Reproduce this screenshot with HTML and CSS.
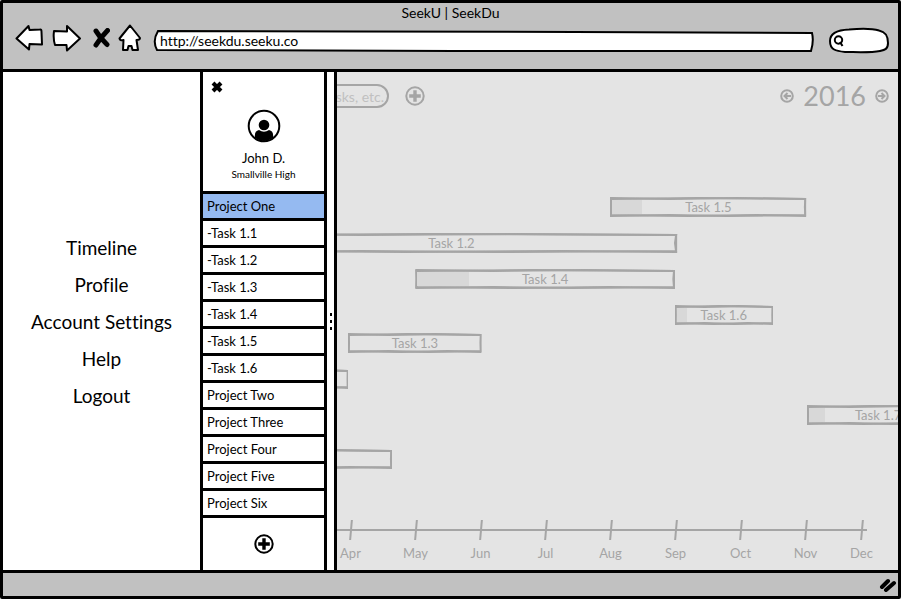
FILE: index.html
```html
<!DOCTYPE html>
<html lang="en">
<head>
<meta charset="utf-8">
<title>SeekU | SeekDu</title>
<link rel="stylesheet" href="styles.css">
</head>
<body>
<svg class="defs" aria-hidden="true">
  <symbol id="frame" viewBox="0 0 200 20" preserveAspectRatio="none">
    <path d="M1 1 L60 2 L130 1 L199 2 L198.500 10 L199 19 L150 18 L80 19 L1 18 L1.500 10 Z" vector-effect="non-scaling-stroke"/>
    <path d="M1 2 L90 1 L199 2 L199 18 L120 19 L60 18 L1 19 Z" vector-effect="non-scaling-stroke"/>
  </symbol>
  <symbol id="plus" viewBox="0 0 20 20">
    <circle cx="10" cy="10" r="8.7" fill="none" stroke="currentColor" stroke-width="2"/>
    <path d="M10 4.2V15.8M4.2 10H15.8" stroke="currentColor" stroke-width="3.4"/>
  </symbol>
</svg>
<div class="window">
  <header class="chrome">
    <div class="title">SeekU | SeekDu</div>
    <div class="toolbar">
      <button class="tool" aria-label="Back"><svg width="28" height="28" viewBox="0 0 28 28"><path d="M1.500 14.500 L13.500 2 L14.500 6 L25 5.500 Q26.500 5 26.500 8 L27 20.500 L14.500 20 L14 25.500 Z"/></svg></button>
      <button class="tool forward" aria-label="Forward"><svg width="29" height="28" viewBox="0 0 29 28"><path d="M2 7 L15 7.500 L15 2 L28 14.500 L15 26.500 L14.500 21 L3 21 Q1 15 2 7 Z"/></svg></button>
      <button class="tool stop" aria-label="Stop"><svg width="17" height="20" viewBox="0 0 17 20"><path d="M3 3 Q7 10 14 16.500 M14.500 2.500 Q8 9 3 17" class="cross"/></svg></button>
      <button class="tool home" aria-label="Home"><svg width="24" height="28" viewBox="0 0 24 28"><path d="M12 1.500 L22 14 Q22 16 18.500 16 L20 26 L14.500 26 L13.500 22 L10.500 22 L9.500 26 L5 26 L5.500 16 Q2 17 1.500 14.500 Z"/></svg></button>
      <label class="address">
        <svg class="outline" viewBox="0 0 660 22" preserveAspectRatio="none" aria-hidden="true"><path d="M5 1 L200 1.500 L420 2 L657 3 Q659 11 656 21 L300 21 L4 20 Q-1 11 5 1 Z" vector-effect="non-scaling-stroke"/></svg>
        <input type="text" aria-label="Address" value="http://seekdu.seeku.co">
      </label>
      <label class="lookup">
        <svg class="outline" viewBox="0 0 60 26" preserveAspectRatio="none" aria-hidden="true"><path d="M1 13 C1 5 8 2 20 1.500 C32 .5 45 1 50 2.500 C57 4 59 8 59 15 C59 21 56 22 51 23 C41 25 26 24 16 24 C7 23 1 22 1 13 Z" vector-effect="non-scaling-stroke"/></svg>
        <svg class="glass" width="11" height="12" viewBox="0 0 11 12" aria-hidden="true"><circle cx="5.500" cy="5" r="3.700"/><path d="M7 7 L9.500 11"/></svg>
        <input type="text" aria-label="Search the web">
      </label>
    </div>
  </header>

  <main class="body">
    <nav class="menu">
      <a href="#">Timeline</a>
      <a href="#">Profile</a>
      <a href="#">Account Settings</a>
      <a href="#">Help</a>
      <a href="#">Logout</a>
    </nav>

    <aside class="panel">
      <div class="profile">
        <button class="close" aria-label="Close panel"><svg width="12" height="12" viewBox="0 0 12 12"><path d="M2 2 L10 10 M10 2 L2 10"/></svg></button>
        <svg class="avatar" width="34" height="34" viewBox="0 0 34 34" aria-hidden="true"><circle cx="17" cy="17" r="15.300" fill="#fff" stroke="#000" stroke-width="2"/><circle cx="17" cy="16" r="5.300"/><path d="M8 29 Q7 22 12 21 Q17 24.500 22 21 Q27 22 26 29 Q17 35 8 29 Z"/></svg>
        <div class="name">John D.</div>
        <div class="school">Smallville High</div>
      </div>
      <ul class="projects">
        <li class="selected">Project One</li>
        <li>-Task 1.1</li>
        <li>-Task 1.2</li>
        <li>-Task 1.3</li>
        <li>-Task 1.4</li>
        <li>-Task 1.5</li>
        <li>-Task 1.6</li>
        <li>Project Two</li>
        <li>Project Three</li>
        <li>Project Four</li>
        <li>Project Five</li>
        <li>Project Six</li>
      </ul>
      <button class="add" aria-label="Add project"><svg width="20" height="20"><use href="#plus"/></svg></button>
    </aside>

    <div class="splitter"><i></i><i></i><i></i></div>

    <section class="timeline">
      <div class="controls">
        <input class="filter" type="text" aria-label="Search tasks" placeholder="Search tasks, etc.">
        <button class="add-task" aria-label="Add task"><svg width="20" height="20"><use href="#plus"/></svg></button>
        <div class="year">
          <button aria-label="Previous year"><svg width="14" height="14" viewBox="0 0 14 14"><circle cx="7" cy="7" r="5.800"/><path d="M11 7H4M7.500 4L4.500 7L7.500 10"/></svg></button>
          <span>2016</span>
          <button aria-label="Next year"><svg width="14" height="14" viewBox="0 0 14 14"><circle cx="7" cy="7" r="5.800"/><path d="M3 7H10M6.500 4L9.500 7L6.500 10"/></svg></button>
        </div>
      </div>
      <div class="chart">
        <div class="bar" style="margin-left:48.7%;width:35%"><svg><use href="#frame"/></svg><b style="width:15%"></b><span>Task 1.5</span></div>
        <div class="bar" style="margin-left:-20.1%;width:81%"><svg><use href="#frame"/></svg><span>Task 1.2</span></div>
        <div class="bar" style="margin-left:13.9%;width:46.4%"><svg><use href="#frame"/></svg><b style="width:20%"></b><span>Task 1.4</span></div>
        <div class="bar" style="margin-left:60.2%;width:17.5%"><svg><use href="#frame"/></svg><b style="width:10%"></b><span>Task 1.6</span></div>
        <div class="bar near" style="margin-left:2%;width:23.8%"><svg><use href="#frame"/></svg><span>Task 1.3</span></div>
        <div class="bar" style="margin-left:-8%;width:10%"><svg><use href="#frame"/></svg></div>
        <div class="bar" style="margin-left:83.8%;width:25.3%"><svg><use href="#frame"/></svg><b style="width:11%"></b><span>Task 1.7</span></div>
        <div class="bar far" style="margin-left:-20%;width:29.8%"><svg><use href="#frame"/></svg></div>
      </div>
      <ol class="months">
        <li>Apr</li><li>May</li><li>Jun</li><li>Jul</li><li>Aug</li><li>Sep</li><li>Oct</li><li>Nov</li><li>Dec</li>
      </ol>
    </section>
  </main>

  <footer class="status">
    <svg width="18" height="14" viewBox="0 0 18 14" aria-hidden="true"><path d="M3 9 L9 3 M7 12 L15 5"/></svg>
  </footer>
</div>
</body>
</html>
```
FILE: styles.css
```css
* { box-sizing: border-box; }

body {
  margin: 0;
  font-family: Lato, "Liberation Sans", sans-serif;
  font-size: 13px;
  font-variant-ligatures: none;
  color: #000;
  background: #fff;
}

button {
  display: flex;
  padding: 0;
  border: 0;
  background: none;
  color: inherit;
}

input {
  font: inherit;
  border: 0;
  background: none;
  outline: 0;
}

ul, ol { margin: 0; padding: 0; list-style: none; }

.defs { position: absolute; width: 0; height: 0; }

.window {
  display: flex;
  flex-direction: column;
  height: 100vh;
  border: 3px solid #000;
  border-radius: 2px;
  overflow: hidden;
}

.chrome {
  background: #c1c1c1;
  border-bottom: 3px solid #000;
  padding-bottom: 16px;
}

.title { text-align: center; font-size: 14px; line-height: 20px; }

.toolbar {
  display: flex;
  align-items: center;
  height: 30px;
  padding: 0 9px 0 12px;
}

.tool svg { fill: #fff; stroke: #000; stroke-width: 2; stroke-linejoin: round; stroke-linecap: round; }
.tool .cross { fill: none; stroke-width: 5; }
.forward { margin-left: 9px; }
.stop { margin-left: 12px; }
.home { margin-left: 8px; }

.address, .lookup { position: relative; display: flex; align-items: center; }
.address { flex: 1; height: 22px; margin: 5px 14px 0 11px; }
.lookup { width: 60px; height: 26px; margin-top: 5px; }

.outline {
  position: absolute;
  inset: 0;
  width: 100%;
  height: 100%;
  overflow: visible;
  fill: #fff;
  stroke: #000;
  stroke-width: 2;
}

.address input { position: relative; width: 100%; padding: 0 7px; font-size: 14px; }
.lookup input { position: relative; width: 36px; }
.glass { position: relative; margin-left: 4px; fill: none; stroke: #000; stroke-width: 2; }

.body { display: flex; flex: 1; min-height: 0; }

.menu {
  display: flex;
  flex-direction: column;
  justify-content: center;
  align-items: center;
  flex: 0 0 197px;
}

.menu a { color: #000; text-decoration: none; font-size: 19px; line-height: 37px; }

.panel {
  display: flex;
  flex-direction: column;
  flex: 0 0 127px;
  border: solid #000;
  border-width: 0 3px;
}

.profile {
  display: flex;
  flex-direction: column;
  align-items: center;
  height: 119px;
  padding-top: 9px;
}

.close { align-self: flex-start; margin-left: 8px; }
.close svg { stroke: #000; stroke-width: 4; }
.avatar { margin-top: 16px; }
.name { margin-top: 5px; line-height: 20px; }
.school { font-size: 10px; line-height: 12px; }

.projects { border-bottom: 3px solid #000; }
.projects li { border-top: 3px solid #000; padding-left: 4px; line-height: 24px; }
.projects .selected { background: #95baf1; }

.add { margin: auto; }

.splitter {
  display: flex;
  flex-direction: column;
  justify-content: center;
  align-items: center;
  gap: 4px;
  flex: 0 0 10px;
  border-right: 3px solid #000;
}

.splitter i { width: 2px; height: 3px; background: #000; }

.timeline {
  display: flex;
  flex-direction: column;
  flex: 1;
  min-width: 0;
  overflow: hidden;
  background: #e4e4e4;
  color: #a5a5a5;
}

.controls { display: flex; align-items: center; height: 48px; padding-right: 9px; }

.filter {
  width: 152px;
  height: 24px;
  margin-left: -100px;
  padding: 0 3px;
  border: 2px solid #a5a5a5;
  border-radius: 12px;
  font-size: 14px;
  text-align: right;
}

.filter::placeholder { color: #c0c0c0; opacity: 1; }

.add-task { margin-left: 16px; }

.year { display: flex; align-items: center; gap: 9px; margin-left: auto; font-size: 27px; line-height: 32px; }
.year svg { fill: none; stroke: #a5a5a5; stroke-width: 2; }

.chart { flex: 1; padding-top: 77px; }

.bar {
  position: relative;
  display: flex;
  align-items: center;
  justify-content: center;
  height: 20px;
  margin-bottom: 16px;
  line-height: 20px;
}

.bar svg {
  position: absolute;
  inset: 0;
  width: 100%;
  height: 100%;
  fill: none;
  stroke: #a5a5a5;
  stroke-width: 2;
}

.bar b { position: absolute; left: 2px; top: 3px; bottom: 3px; background: #d8d8d8; }
.bar span { position: relative; }
.bar.near { margin-top: -8px; }
.bar.far { margin-top: 24px; }

.months {
  position: relative;
  display: grid;
  grid-template-columns: repeat(8, 65fr) 47fr;
  margin: 0 13px 0 -19px;
  padding-bottom: 7px;
}

.months::before {
  content: "";
  position: absolute;
  left: 0;
  right: 18px;
  top: 9px;
  height: 2px;
  background: #a5a5a5;
}

.months li { display: flex; flex-direction: column; align-items: center; line-height: 20px; }

.months li::before {
  content: "";
  width: 2px;
  height: 20px;
  margin-bottom: 3px;
  background: #a5a5a5;
  transform: skewX(-5deg);
}

.status {
  display: flex;
  justify-content: flex-end;
  align-items: center;
  height: 26px;
  padding-right: 1px;
  border-top: 3px solid #000;
  background: #c1c1c1;
}

.status path { stroke: #000; stroke-width: 4; stroke-linecap: round; }
```
